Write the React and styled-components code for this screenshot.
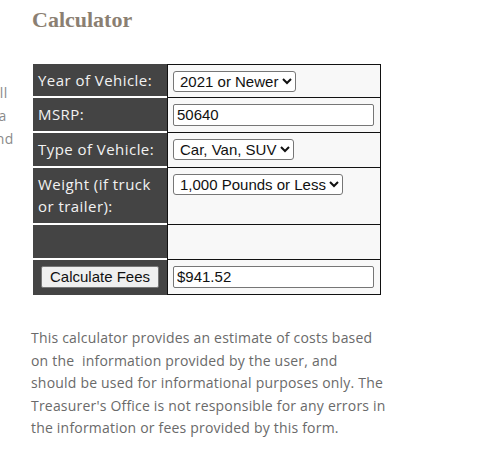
import React from "react";
import styled, { createGlobalStyle } from "styled-components";

const Global = createGlobalStyle`
  html, body { margin: 0; padding: 0; background: #fff; }
  body { font-family: "Open Sans", sans-serif; }
`;

const Page = styled.div`
  display: flex;
  width: 477px;
  min-height: 469px;
  overflow: hidden;
`;

const SideClip = styled.div`
  width: 14px;
  flex: none;
  overflow: hidden;
  padding-top: 81px;
  display: flex;
  flex-direction: column;
`;

const SideLine = styled.div`
  display: flex;
  justify-content: flex-end;
  padding-right: ${(p) => p.$pad || 0}px;
  white-space: nowrap;
  font-family: "Open Sans", sans-serif;
  font-size: 14px;
  letter-spacing: 0.6px;
  line-height: 23px;
  color: #8a8a8a;
`;

const Main = styled.div`
  margin-left: 18px;
  display: flex;
  flex-direction: column;
`;

const Heading = styled.h2`
  margin: 6px 0 0 0;
  font-family: "Liberation Serif", serif;
  font-weight: bold;
  font-size: 22px;
  line-height: 28px;
  color: #8b7f72;
`;

const Table = styled.table`
  margin-top: 30px;
  margin-left: 1px;
  border-collapse: separate;
  border-spacing: 0;
  width: 348px;
  table-layout: fixed;
`;

const Row = styled.tr`
  height: ${(p) => p.$h}px;
`;

const Label = styled.td`
  width: 134px;
  background: #444;
  color: #f2f2f2;
  font-family: "Open Sans", sans-serif;
  font-size: 15px;
  letter-spacing: 0.45px;
  line-height: 22px;
  padding: 5px 5px;
  vertical-align: top;
  white-space: ${(p) => (p.$center ? "nowrap" : "normal")};
  border-bottom: ${(p) => (p.$last ? "0" : "2px solid #fff")};
  text-align: ${(p) => (p.$center ? "center" : "left")};
  box-sizing: border-box;
`;

const Value = styled.td`
  background: #f8f8f8;
  padding: 5px 5px;
  vertical-align: top;
  border-left: 1px solid #111;
  border-right: 1px solid #111;
  border-bottom: 1px solid #111;
  border-top: ${(p) => (p.$first ? "1px solid #111" : "0")};
  box-sizing: border-box;
`;

const Select = styled.select`
  font-family: "Liberation Sans", Arial, sans-serif;
  font-size: 15px;
  height: 21px;
  padding: 0 0 0 2px;
  border: 1px solid #767676;
  border-radius: 3px;
  background: #fff;
  color: #111;
`;

const TextInput = styled.input`
  font-family: "Liberation Sans", Arial, sans-serif;
  font-size: 15px;
  width: 201px;
  height: 22px;
  box-sizing: border-box;
  padding: 1px 3px;
  border: 1px solid #767676;
  border-radius: 2px;
  background: #fff;
  color: #111;
`;

const Button = styled.button`
  font-family: "Liberation Sans", Arial, sans-serif;
  font-size: 15px;
  letter-spacing: 0;
  height: 22px;
  padding: 1px 8px;
  border: 1px solid #767676;
  border-radius: 2px;
  background: #efefef;
  color: #111;
`;

const Note = styled.p`
  margin: 32px 0 0 -1px;
  width: 360px;
  white-space: nowrap;
  font-family: "Open Sans", sans-serif;
  font-size: 14px;
  letter-spacing: 0.2px;
  line-height: 22.5px;
  color: #6a6a6a;
`;

export default function App() {
  return (
    <Page>
      <Global />
      <SideClip>
        <SideLine $pad={6}>will</SideLine>
        <SideLine $pad={7}>a</SideLine>
        <SideLine $pad={0}>and</SideLine>
      </SideClip>
      <Main>
        <Heading>Calculator</Heading>
        <Table>
          <tbody>
            <Row $h={34}>
              <Label>Year of Vehicle:</Label>
              <Value $first>
                <Select defaultValue="2021">
                  <option value="2021">2021 or Newer</option>
                </Select>
              </Value>
            </Row>
            <Row $h={35}>
              <Label>MSRP:</Label>
              <Value>
                <TextInput defaultValue="50640" />
              </Value>
            </Row>
            <Row $h={35}>
              <Label>Type of Vehicle:</Label>
              <Value>
                <Select defaultValue="car">
                  <option value="car">Car, Van, SUV</option>
                </Select>
              </Value>
            </Row>
            <Row $h={57}>
              <Label>Weight (if truck or trailer):</Label>
              <Value>
                <Select defaultValue="1000">
                  <option value="1000">1,000 Pounds or Less</option>
                </Select>
              </Value>
            </Row>
            <Row $h={35}>
              <Label />
              <Value />
            </Row>
            <Row $h={35}>
              <Label $last $center>
                <Button>Calculate Fees</Button>
              </Label>
              <Value>
                <TextInput defaultValue="$941.52" readOnly />
              </Value>
            </Row>
          </tbody>
        </Table>
        <Note>
          This calculator provides an estimate of costs based
          <br />
          on the{"\u00a0"} information provided by the user, and
          <br />
          should be used for informational purposes only. The
          <br />
          Treasurer's Office is not responsible for any errors in
          <br />
          the information or fees provided by this form.
        </Note>
      </Main>
    </Page>
  );
}
